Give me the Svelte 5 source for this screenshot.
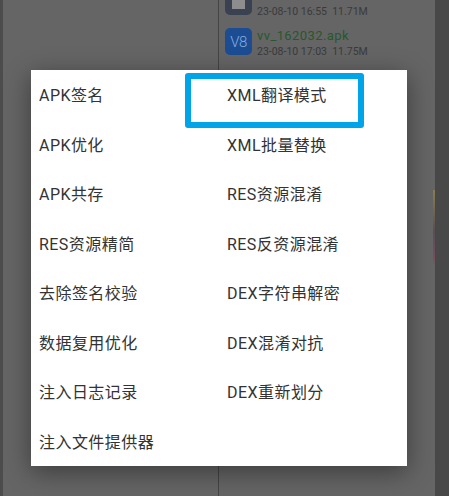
<script>
  const left = ['APK签名','APK优化','APK共存','RES资源精简','去除签名校验','数据复用优化','注入日志记录','注入文件提供器'];
  const right = ['XML翻译模式','XML批量替换','RES资源混淆','RES反资源混淆','DEX字符串解密','DEX混淆对抗','DEX重新划分'];
  const items = [];
  left.forEach((l, i) => { items.push(l); items.push(right[i] ?? ''); });
</script>

<div class="screen">
  <div class="edge"></div>
  <div class="pane">
    <div class="col first"></div>
    <div class="col files">
      <div class="file top">
        <div class="icon dark"><span class="sheet"></span></div>
        <div class="meta"><div class="name"></div><div class="info">23-08-10 16:55&nbsp; 11.71M</div></div>
      </div>
      <div class="file">
        <div class="icon blue"><span class="badge">V8</span></div>
        <div class="meta"><div class="name">vv_162032.apk</div><div class="info">23-08-10 17:03&nbsp; 11.75M</div></div>
      </div>
    </div>
    <div class="sliver"></div>
  </div>
  <div class="edge wide"></div>

  <div class="dialog">
    <div class="grid">
      {#each items as item}
        <div class="item">{item}</div>
      {/each}
    </div>
    <div class="mark"></div>
  </div>
</div>

<style>
  :global(body) { margin: 0; }
  .screen {
    position: relative; width: 449px; height: 496px; overflow: hidden;
    display: flex; background: #4a4a4a;
    font-family: Roboto, "Noto Sans CJK SC", sans-serif;
  }
  .edge { width: 3px; background: #4c4c4c; flex: none; }
  .edge.wide { width: 14px; background: #484848; }
  .pane { flex: 1; display: flex; background: #656565; position: relative; }
  .col.first { width: 215px; border-right: 1px solid #454545; flex: none; }
  .files { flex: 1; padding-left: 6px; }
  .file { display: flex; gap: 5px; height: 40px; }
  .file.top { margin-top: -25px; }
  .icon {
    width: 27px; height: 27px; margin-top: 13px; border-radius: 5px; flex: none;
    display: flex; align-items: center; justify-content: center;
  }
  .icon.dark { background: #3a4150; }
  .icon.blue { background: #1c4c92; }
  .badge { font-size: 15px; font-weight: 300; color: #86ade2; letter-spacing: -0.5px; }
  .sheet { width: 13px; height: 15px; background: #8d8d8d; }
  .meta { padding-top: 13px; }
  .name { height: 15px; font-size: 13px; line-height: 15px; color: #27582c; letter-spacing: 0.4px; white-space: nowrap; }
  .info { margin-top: 2px; font-size: 10.5px; line-height: 13px; color: #3a3a3a; white-space: nowrap; }
  .sliver {
    position: absolute; left: 430px; top: 190px; width: 2px; height: 75px;
    background: linear-gradient(#8d7f4c, #5a4f55 55%, #7a4c62 90%, #656565);
  }
  .dialog {
    position: absolute; left: 31px; top: 70px; width: 376px; height: 396px;
    background: #fff; box-shadow: 0 6px 24px rgba(0,0,0,0.42);
  }
  .grid { display: grid; grid-template-columns: 188px 188px; grid-auto-rows: 49.5px; }
  .item {
    padding-left: 8px; padding-bottom: 1px; display: flex; align-items: center;
    font-size: 16px; letter-spacing: 0.45px; color: #333; white-space: nowrap; box-sizing: border-box;
  }
  .mark {
    position: absolute; left: 154px; top: 3px; width: 179px; height: 55px;
    box-sizing: border-box; border: 6px solid #00a4e8; border-radius: 3px;
  }
</style>
